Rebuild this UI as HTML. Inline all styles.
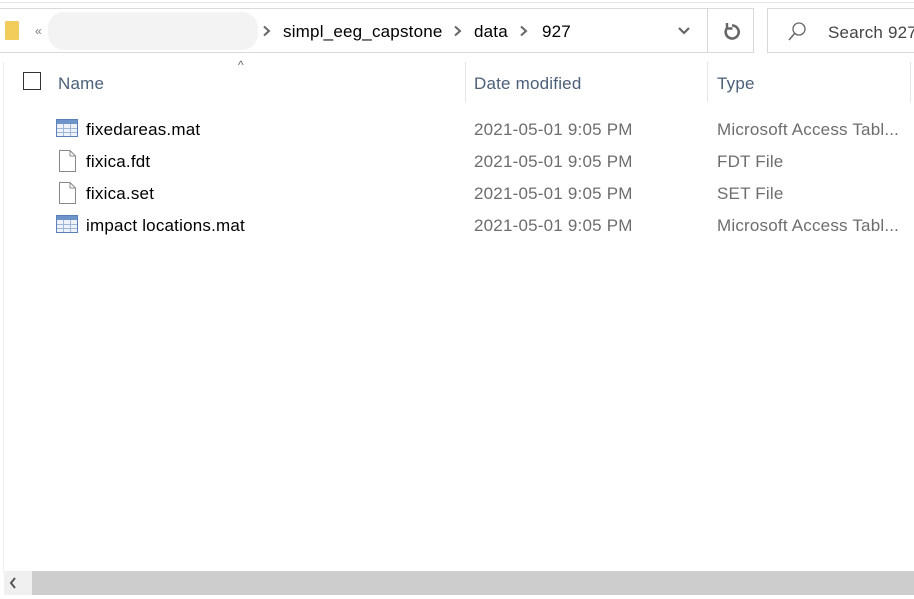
<!DOCTYPE html>
<html><head><style>
body{margin:0;width:914px;height:599px;background:#fff;font-family:"Liberation Sans",sans-serif;position:relative;overflow:hidden;color:#000}
.a{position:absolute}
.t{font-size:17px;white-space:nowrap;letter-spacing:0.2px}
</style></head><body>
<div class="a" style="left:0;top:2px;width:914px;height:1px;background:#e3e3e3"></div>
<div class="a" style="left:0;top:8px;width:754px;height:45px;border:1px solid #d9d9d9;border-left:none;box-sizing:border-box"></div>
<div class="a" style="left:707px;top:8px;width:1px;height:45px;background:#d9d9d9"></div>
<div class="a" style="left:767px;top:8px;width:160px;height:45px;border:1px solid #d9d9d9;box-sizing:border-box"></div>
<div class="a" style="left:5px;top:21px;width:14px;height:19px;background:#f3cd5c;border-radius:1px"></div>
<div class="a" style="left:35px;top:24px;font-size:12px;color:#777">«</div>
<div class="a" style="left:48px;top:12px;width:210px;height:38px;background:#f0f0f0;border-radius:16px;opacity:.8"></div>
<svg class="a" style="left:262px;top:25px" width="10" height="12"><path d="M2 1.5 L7 6 L2 10.5" stroke="#666" stroke-width="2" fill="none"/></svg>
<div class="a t" style="left:283px;top:22px">simpl_eeg_capstone</div>
<svg class="a" style="left:453px;top:25px" width="10" height="12"><path d="M2 1.5 L7 6 L2 10.5" stroke="#666" stroke-width="2" fill="none"/></svg>
<div class="a t" style="left:474px;top:22px">data</div>
<svg class="a" style="left:519px;top:25px" width="10" height="12"><path d="M2 1.5 L7 6 L2 10.5" stroke="#666" stroke-width="2" fill="none"/></svg>
<div class="a t" style="left:542px;top:22px">927</div>
<svg class="a" style="left:677px;top:26px" width="14" height="10"><path d="M2 2 L7 7 L12 2" stroke="#666" stroke-width="2.2" fill="none"/></svg>
<svg class="a" style="left:721px;top:21px" width="22" height="22"><path d="M6.5 6.5 A6.5 6.5 0 1 0 11 4.5" stroke="#666" stroke-width="2.6" fill="none"/><path d="M6 2 L6 7.5 L11.5 7.5" stroke="#666" stroke-width="2.4" fill="none"/></svg>
<svg class="a" style="left:787px;top:21px" width="22" height="22"><circle cx="12" cy="8" r="6" stroke="#666" stroke-width="1.3" fill="none"/><path d="M8 12 L2 19" stroke="#666" stroke-width="1.5"/></svg>
<div class="a t" style="left:828px;top:23px;color:#444">Search 927</div>
<div class="a" style="left:3px;top:62px;width:1px;height:510px;background:#eee"></div>
<div class="a" style="left:23px;top:72px;width:18px;height:18px;border:1px solid #333;box-sizing:border-box"></div>
<div class="a" style="left:238px;top:58px;font-size:12px;color:#666">^</div>
<div class="a t" style="left:58px;top:74px;color:#4c607a">Name</div>
<div class="a" style="left:465px;top:62px;width:1px;height:40px;background:#e5e5e5"></div>
<div class="a t" style="left:474px;top:74px;color:#4c607a">Date modified</div>
<div class="a" style="left:707px;top:62px;width:1px;height:40px;background:#e5e5e5"></div>
<div class="a t" style="left:717px;top:74px;color:#4c607a">Type</div>
<div class="a" style="left:910px;top:62px;width:1px;height:40px;background:#e5e5e5"></div>

<svg class="a" style="left:56px;top:119px" width="22" height="18"><rect x="0.5" y="0.5" width="21" height="17" fill="#eef3fb" stroke="#5b7fb8"/><rect x="1" y="1" width="20" height="4" fill="#6f94cc"/><path d="M1 9.5H21M1 13.5H21M7.5 5V17M14.5 5V17" stroke="#9fb5da"/></svg>
<svg class="a" style="left:59px;top:150px" width="17" height="22"><path d="M0.5 0.5H11L16.5 6V21.5H0.5Z" fill="#fff" stroke="#888"/><path d="M11 0.5V6H16.5" fill="none" stroke="#888"/></svg>
<svg class="a" style="left:59px;top:182px" width="17" height="22"><path d="M0.5 0.5H11L16.5 6V21.5H0.5Z" fill="#fff" stroke="#888"/><path d="M11 0.5V6H16.5" fill="none" stroke="#888"/></svg>
<svg class="a" style="left:56px;top:215px" width="22" height="18"><rect x="0.5" y="0.5" width="21" height="17" fill="#eef3fb" stroke="#5b7fb8"/><rect x="1" y="1" width="20" height="4" fill="#6f94cc"/><path d="M1 9.5H21M1 13.5H21M7.5 5V17M14.5 5V17" stroke="#9fb5da"/></svg>

<div class="a t" style="left:86px;top:120px">fixedareas.mat</div>
<div class="a t" style="left:86px;top:152px">fixica.fdt</div>
<div class="a t" style="left:86px;top:184px">fixica.set</div>
<div class="a t" style="left:86px;top:216px">impact locations.mat</div>
<div class="a t" style="left:474px;top:120px;color:#6d6d6d">2021-05-01 9:05 PM</div>
<div class="a t" style="left:474px;top:152px;color:#6d6d6d">2021-05-01 9:05 PM</div>
<div class="a t" style="left:474px;top:184px;color:#6d6d6d">2021-05-01 9:05 PM</div>
<div class="a t" style="left:474px;top:216px;color:#6d6d6d">2021-05-01 9:05 PM</div>
<div class="a t" style="left:717px;top:120px;color:#6d6d6d">Microsoft Access Tabl...</div>
<div class="a t" style="left:717px;top:152px;color:#6d6d6d">FDT File</div>
<div class="a t" style="left:717px;top:184px;color:#6d6d6d">SET File</div>
<div class="a t" style="left:717px;top:216px;color:#6d6d6d">Microsoft Access Tabl...</div>

<div class="a" style="left:4px;top:571px;width:910px;height:24px;background:#f0f0f0"></div>
<div class="a" style="left:32px;top:571px;width:882px;height:24px;background:#cdcdcd"></div>
<svg class="a" style="left:7px;top:576px" width="12" height="14"><path d="M8 2 L4 7 L8 12" stroke="#555" stroke-width="2" fill="none"/></svg>
</body></html>
